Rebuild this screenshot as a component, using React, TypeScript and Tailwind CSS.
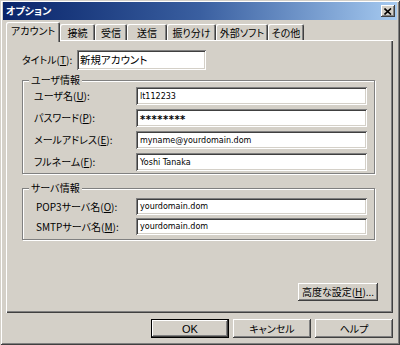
import React from "react";

const sunken =
  "bg-white shadow-[inset_1px_1px_0_#808080,inset_-1px_-1px_0_#fff,inset_2px_2px_0_#404040,inset_-2px_-2px_0_#d4d0c8]";
const raised =
  "bg-[#d4d0c8] shadow-[inset_-1px_-1px_0_#404040,inset_1px_1px_0_#fff,inset_-2px_-2px_0_#808080,inset_2px_2px_0_#d4d0c8]";
const latin = "[font-family:'DejaVu_Sans',sans-serif] text-[8px]";

function U({ c }: { c: string }) {
  return <span className="underline underline-offset-1">{c}</span>;
}

function Field({
  label,
  value,
  h,
  labelW,
  big,
}: {
  label: React.ReactNode;
  value: string;
  h: string;
  labelW: string;
  big?: boolean;
}) {
  return (
    <div className={`flex items-center ${h}`}>
      <div className={`${labelW} shrink-0 leading-[12px]`}>{label}</div>
      <div className={`${sunken} ${h} w-[231px] flex items-center pl-[4px] pt-[1px]`}>
        <span
          className={
            big
              ? "[font-family:'DejaVu_Sans',sans-serif] text-[10px] font-bold tracking-[0.5px] leading-[10px] pt-[3px]"
              : `${latin} leading-[10px]`
          }
        >
          {value}
        </span>
      </div>
    </div>
  );
}

function Tab({ label, w, active }: { label: string; w: string; active?: boolean }) {
  return (
    <div
      className={`${w} flex items-center justify-center leading-[12px] bg-[#d4d0c8] rounded-t-[2px] shadow-[inset_1px_1px_0_#fff,inset_-1px_0_0_#404040,inset_-2px_0_0_#808080] ${
        active ? "relative z-10 mt-[2px] h-[20px] -ml-[2px] pb-[3px]" : "mt-[4px] h-[16px] pt-[1px]"
      }`}
    >
      {label}
    </div>
  );
}

function Button({ children, w, def }: { children: React.ReactNode; w: string; def?: boolean }) {
  return (
    <div
      className={`${w} h-[19px] flex items-center justify-center leading-[12px] ${
        def ? "border border-black" : ""
      }`}
    >
      <div className={`${raised} w-full h-full flex items-center justify-center`}>{children}</div>
    </div>
  );
}

export default function App() {
  return (
    <div
      className="w-[400px] h-[345px] bg-[#d4d0c8] text-black text-[10px] [font-family:'Noto_Sans_CJK_JP',sans-serif] [font-feature-settings:'palt'] flex flex-col pt-[2px] px-[3px] shadow-[inset_1px_1px_0_#d4d0c8,inset_-1px_-1px_0_#404040,inset_2px_2px_0_#fff,inset_-2px_-2px_0_#808080] overflow-hidden"
    >
      {/* Title bar */}
      <div className="h-[18px] shrink-0 flex items-center justify-between pl-[3px] pr-[2px] bg-gradient-to-r from-[#0a246a] via-[#3a5fa0] to-[#a6caf0]">
        <span className="text-white font-bold text-[10px] leading-[12px]">オプション</span>
        <div className={`${raised} w-[14px] h-[12px] flex items-center justify-center`}>
          <svg width="8" height="7" viewBox="0 0 8 7">
            <path d="M0.5 0.5 L7 6.5 M7 0.5 L0.5 6.5" stroke="#000" strokeWidth="1.6" />
          </svg>
        </div>
      </div>

      {/* Tabs */}
      <div className="h-[20px] shrink-0 flex items-start pl-[5px]">
        <Tab label="アカウント" w="w-[54px]" active />
        <Tab label="接続" w="w-[35px]" />
        <Tab label="受信" w="w-[32px]" />
        <Tab label="送信" w="w-[40px]" />
        <Tab label="振り分け" w="w-[49px]" />
        <Tab label="外部ソフト" w="w-[52px]" />
        <Tab label="その他" w="w-[36px]" />
      </div>

      {/* Panel */}
      <div className="ml-[3px] w-[387px] h-[273px] shrink-0 flex flex-col shadow-[inset_1px_1px_0_#fff,inset_-1px_-1px_0_#404040,inset_-2px_-2px_0_#808080]">
        <div className="pt-[10px] pl-[16px] flex items-center h-[30px]">
          <div className="w-[55px] leading-[12px]">
            タイトル(<U c="T" />):
          </div>
          <div className={`${sunken} w-[129px] h-[20px] flex items-center pl-[3px]`}>
            <span className="text-[10.5px] leading-[12px]">新規アカウント</span>
          </div>
        </div>

        {/* User info group */}
        <div className="relative mt-[10px] ml-[16px] w-[353px] h-[94px] border border-[#808080] shadow-[1px_1px_0_#fff,inset_1px_1px_0_#fff] pt-[6px] pl-[11px] flex flex-col gap-[4px]">
          <span className="absolute left-[6px] -top-[7px] px-[2px] bg-[#d4d0c8] leading-[12px]">ユーザ情報</span>
          <Field label={<>ユーザ名(<U c="U" />):</>} value="lt112233" h="h-[18px]" labelW="w-[102px]" />
          <Field label={<>パスワード(<U c="P" />):</>} value="********" h="h-[18px]" labelW="w-[102px]" big />
          <Field
            label={<>メールアドレス(<U c="E" />):</>}
            value="myname@yourdomain.dom"
            h="h-[18px]"
            labelW="w-[102px]"
          />
          <Field label={<>フルネーム(<U c="F" />):</>} value="Yoshi Tanaka" h="h-[18px]" labelW="w-[102px]" />
        </div>

        {/* Server info group */}
        <div className="relative mt-[14px] ml-[16px] w-[353px] h-[52px] border border-[#808080] shadow-[1px_1px_0_#fff,inset_1px_1px_0_#fff] pt-[9px] pl-[13px] flex flex-col gap-[3px]">
          <span className="absolute left-[6px] -top-[7px] px-[2px] bg-[#d4d0c8] leading-[12px]">サーバ情報</span>
          <Field
            label={<>POP3サーバ名(<U c="O" />):</>}
            value="yourdomain.dom"
            h="h-[17px]"
            labelW="w-[100px]"
          />
          <Field
            label={<>SMTPサーバ名(<U c="M" />):</>}
            value="yourdomain.dom"
            h="h-[17px]"
            labelW="w-[100px]"
          />
        </div>

        <div className="mt-auto pb-[12px] pr-[15px] flex justify-end">
          <div className={`${raised} w-[80px] h-[18px] flex items-center justify-center leading-[12px]`}>
            高度な設定(<U c="H" />)...
          </div>
        </div>
      </div>

      {/* Bottom buttons */}
      <div className="mt-[6px] pr-[4px] flex justify-end gap-[4px]">
        <Button w="w-[78px]" def>
          <span className="[font-family:'Liberation_Sans',sans-serif] text-[11px]">OK</span>
        </Button>
        <Button w="w-[78px]">キャンセル</Button>
        <Button w="w-[78px]">ヘルプ</Button>
      </div>
    </div>
  );
}
